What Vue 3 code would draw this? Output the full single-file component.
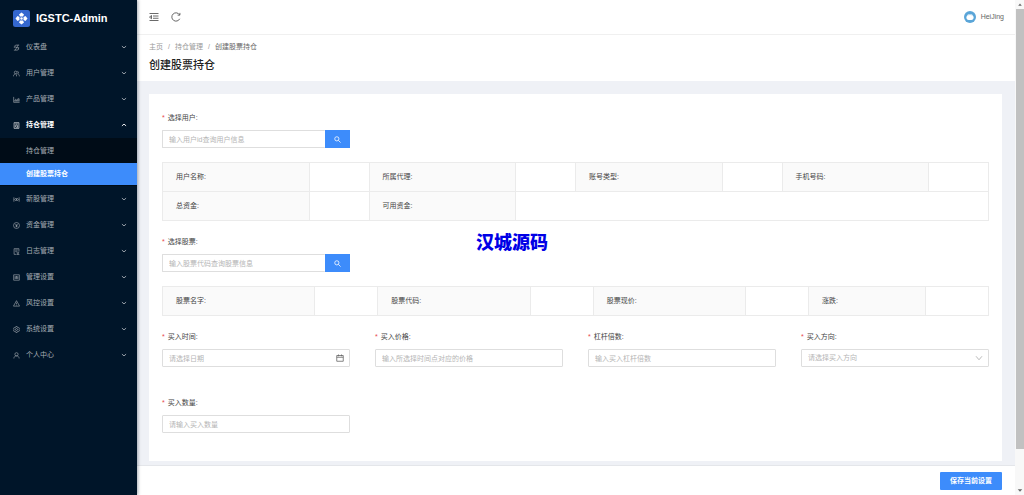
<script setup>
import { ref } from 'vue'

const menu = [
  { label: '仪表盘', icon: 'dash' },
  { label: '用户管理', icon: 'users' },
  { label: '产品管理', icon: 'chart' },
  { label: '持仓管理', icon: 'position', open: true, children: [{ label: '持仓管理' }, { label: '创建股票持仓', active: true }] },
  { label: '新股管理', icon: 'stock' },
  { label: '资金管理', icon: 'money' },
  { label: '日志管理', icon: 'log' },
  { label: '管理设置', icon: 'control' },
  { label: '风控设置', icon: 'warning' },
  { label: '系统设置', icon: 'gear' },
  { label: '个人中心', icon: 'user' },
]

const icons = {
  dash: 'M14 2.500H6.500a3 3 0 0 0 0 5.500h3a3 3 0 0 1 0 6H2M2 5h2M2 8h2M12 8h2M12 11h2M5 14l7-12',
  users: 'M6 8.500a3 3 0 1 1 0-6 3 3 0 0 1 0 6zM1 14.500c0-3.500 2-5.500 5-5.500M10 3c3 0 3.500 4.500 .5 5.500 2.500 .5 4 2.500 4 6M8 10v4.500',
  chart: 'M1.500 2v12.500h13.500M4 12.500V9M6 12.500V6.500M8 12.500V8.500M10 12.500V7M12 12.500V4.500M14 12.500V6',
  position: 'M2.500 1.500h11v13h-11zM5 4.500h6M8 12a2.500 2.500 0 1 1 0-5 2.500 2.500 0 0 1 0 5zM9.500 11.500l2 1.500',
  stock: 'M2 3v10M14 3v10M2 8h2M12 8h2M5 4.500l2.500 3.500L5 11.500M11 4.500L8.500 8l2.500 3.500M8 5v6',
  money: 'M8 1.200a6.800 6.800 0 1 1 0 13.600A6.800 6.800 0 0 1 8 1.200zM5.500 4.500L8 7.500l2.500-3M8 7.500v4.500M6 8h4M6 10h4',
  log: 'M13.500 8V1.500h-11v13H7M5 4.500h6M5 7.500h4M11 9a2 2 0 1 1 0 4 2 2 0 0 1 0-4zM8 14.800h6.500',
  control: 'M1.500 1.800h13v12.400h-13zM5 4.500v7M8 4.500v7M11 4.500v7M4 9h2M7 6.500h2M10 9h2',
  warning: 'M8 1.500L15 14H1zM8 6v4M8 11.200v1.300',
  gear: 'M6.500 1.200h3l.6 2 1.600 .9 2-.5 1.400 2.500-1.400 1.900 1.400 1.900-1.400 2.500-2-.5-1.600 .9-.6 2h-3l-.6-2-1.600-.9-2 .5L.9 9.900 2.300 8 .9 6.100l1.400-2.500 2 .5 1.600-.9zM8 5.700a2.300 2.300 0 1 1 0 4.600 2.300 2.300 0 0 1 0-4.600z',
  user: 'M8 1.500a3.700 3.700 0 1 1 0 7.400 3.700 3.700 0 0 1 0-7.400zM2 14.800c0-3.600 2.500-5.900 6-5.900s6 2.300 6 5.900',
}

const form = ref({ user: '', stock: '', date: '', price: '', lever: '', direction: '', amount: '' })
</script>

<template>
  <div class="app">
    <aside class="sidebar">
      <div class="brand">
        <svg class="brand-logo" viewBox="0 0 34 34" aria-hidden="true">
          <rect width="34" height="34" rx="5" fill="#3467cf" />
          <g fill="#fff">
            <path d="M17 5l5 4-2 4h-6l-2-4z" />
            <path d="M17 29l5-4-2-4h-6l-2 4z" />
            <path d="M5 17l4-5 4 2v6l-4 2z" />
            <path d="M29 17l-4-5-4 2v6l4 2z" />
            <circle cx="17" cy="17" r="2.500" />
          </g>
        </svg>
        <span>IGSTC-Admin</span>
      </div>
      <nav>
        <template v-for="item in menu" :key="item.label">
          <button type="button" class="menu-item" :class="{ open: item.open }">
            <svg class="menu-icon" viewBox="0 0 16 16" aria-hidden="true"><path :d="icons[item.icon]" /></svg>
            <span class="menu-label">{{ item.label }}</span>
            <svg class="arrow" viewBox="0 0 10 10" aria-hidden="true"><path d="M1.500 3.500L5 6.500l3.500-3" /></svg>
          </button>
          <div v-if="item.children" class="submenu">
            <a v-for="c in item.children" :key="c.label" href="#" :class="{ active: c.active }">{{ c.label }}</a>
          </div>
        </template>
      </nav>
    </aside>

    <div class="page">
      <header class="topbar">
        <button type="button" class="tool" aria-label="收起菜单">
          <svg viewBox="0 0 20 20"><path d="M1 3h18M8 8h11M8 12.500h11M1 17h18M5 7v6.500L1 10.200z" /></svg>
        </button>
        <button type="button" class="tool" aria-label="刷新">
          <svg viewBox="0 0 20 20"><path d="M17.500 13.500A8.300 8.300 0 1 1 17 5.500M17.800 1.800v4.500h-4.500" /></svg>
        </button>
        <button type="button" class="account">
          <svg viewBox="0 0 24 24" aria-hidden="true">
            <circle cx="12" cy="12" r="12" fill="#5aa5d8" />
            <path d="M6 9.500c2-5 10-5 12 0 2.500 3 1.500 8-3 8.500H9c-4.500-.5-5.500-5.500-3-8.500z" fill="#fff" />
            <path d="M7 8.500c3-2 7-2 10 0" stroke="#a9d2ee" stroke-width="2" fill="none" />
          </svg>
          <span>HeiJing</span>
        </button>
      </header>

      <section class="heading">
        <div class="crumbs">
          <a href="#">主页</a><i>/</i><a href="#">持仓管理</a><i>/</i><span>创建股票持仓</span>
        </div>
        <h1>创建股票持仓</h1>
      </section>

      <main>
        <form id="position-form" class="card" @submit.prevent>
          <div class="grid">
            <div class="field">
              <label for="user">选择用户:</label>
              <div class="search">
                <input id="user" v-model="form.user" type="text" placeholder="输入用户id查询用户信息" />
                <button type="button" aria-label="查询用户"><svg viewBox="0 0 16 16"><circle cx="6.500" cy="6.500" r="4.800" /><path d="M10 10l5 5" /></svg></button>
              </div>
            </div>
          </div>

          <table class="user-table">
            <colgroup>
              <template v-for="n in 4" :key="n"><col /><col class="value" /></template>
            </colgroup>
            <tbody>
              <tr>
                <th scope="row">用户名称:</th><td></td>
                <th scope="row">所属代理:</th><td></td>
                <th scope="row">账号类型:</th><td></td>
                <th scope="row">手机号码:</th><td></td>
              </tr>
              <tr>
                <th scope="row">总资金:</th><td></td>
                <th scope="row">可用资金:</th><td colspan="5"></td>
              </tr>
            </tbody>
          </table>

          <div class="grid">
            <div class="field">
              <label for="stock">选择股票:</label>
              <div class="search">
                <input id="stock" v-model="form.stock" type="text" placeholder="输入股票代码查询股票信息" />
                <button type="button" aria-label="查询股票"><svg viewBox="0 0 16 16"><circle cx="6.500" cy="6.500" r="4.800" /><path d="M10 10l5 5" /></svg></button>
              </div>
            </div>
          </div>

          <table class="stock-table">
            <colgroup>
              <col /><col class="value" /><col /><col class="value" /><col /><col class="value" /><col class="change" /><col class="value" />
            </colgroup>
            <tbody>
              <tr>
                <th scope="row">股票名字:</th><td></td>
                <th scope="row">股票代码:</th><td></td>
                <th scope="row">股票现价:</th><td></td>
                <th scope="row">涨跌:</th><td></td>
              </tr>
            </tbody>
          </table>

          <div class="grid">
            <div class="field">
              <label for="date">买入时间:</label>
              <div class="control">
                <input id="date" v-model="form.date" type="text" placeholder="请选择日期" />
                <svg class="calendar" viewBox="0 0 16 16" aria-hidden="true"><path d="M1.500 3h13v11.500h-13zM1.500 6.500h13M5 1v3.500M11 1v3.500" /></svg>
              </div>
            </div>
            <div class="field">
              <label for="price">买入价格:</label>
              <input id="price" v-model="form.price" type="text" placeholder="输入所选择时间点对应的价格" />
            </div>
            <div class="field">
              <label for="lever">杠杆倍数:</label>
              <input id="lever" v-model="form.lever" type="text" placeholder="输入买入杠杆倍数" />
            </div>
            <div class="field">
              <label for="direction">买入方向:</label>
              <div class="control">
                <select id="direction" v-model="form.direction">
                  <option value="" disabled>请选择买入方向</option>
                  <option value="up">买涨</option>
                  <option value="down">买跌</option>
                </select>
                <svg class="chevron" viewBox="0 0 16 16" aria-hidden="true"><path d="M2 4.500l6 7 6-7" /></svg>
              </div>
            </div>
            <div class="field">
              <label for="amount">买入数量:</label>
              <input id="amount" v-model="form.amount" type="text" placeholder="请输入买入数量" />
            </div>
          </div>
        </form>
      </main>

      <footer>
        <button type="submit" form="position-form" class="save">保存当前设置</button>
      </footer>
    </div>

    <div class="scrollbar" aria-hidden="true">
      <svg viewBox="0 0 9 9"><path d="M2.500 6L4.500 3.500l2 2.500z" /></svg>
      <div class="thumb"></div>
      <div class="track"></div>
      <svg viewBox="0 0 9 9"><path d="M2 3l2.500 3L7 3z" /></svg>
    </div>

    <div class="watermark">汉城源码</div>
  </div>
</template>

<style>
body {
  background: #eff1f6;
}
</style>

<style scoped>
.app {
  position: relative;
  display: flex;
  min-height: 100vh;
  font-family: "Liberation Sans", "Noto Sans CJK SC", sans-serif;
  font-size: 7px;
  line-height: 12px;
  color: #444;
}
.app *, .app *::before {
  box-sizing: border-box;
}
button, input, select {
  font: inherit;
  color: inherit;
}
button {
  border: 0;
  padding: 0;
  background: none;
  cursor: pointer;
}
a {
  color: inherit;
  text-decoration: none;
}
svg {
  display: block;
  fill: none;
  stroke: currentColor;
}

/* Sidebar */
.sidebar {
  position: relative;
  z-index: 1;
  flex: 0 0 137px;
  background: #001529;
  color: #a6adb4;
  box-shadow: 1px 0 3px rgba(0, 21, 41, 0.35);
}
.brand {
  display: flex;
  align-items: center;
  gap: 6px;
  height: 34px;
  padding: 2px 13px 0;
  color: #fff;
  font-size: 11px;
  font-weight: bold;
}
.brand-logo {
  width: 17px;
  height: 17px;
  stroke: none;
}
.menu-item {
  display: flex;
  align-items: center;
  gap: 6px;
  width: 100%;
  height: 26px;
  padding: 0 10px 0 13px;
  text-align: left;
}
.menu-icon {
  width: 7px;
  height: 7px;
  stroke-width: 1.4;
}
.menu-label {
  flex: 1;
}
.arrow {
  width: 6px;
  height: 6px;
  stroke-width: 1.5;
}
.open {
  color: #fff;
  font-weight: bold;
}
.open .arrow {
  transform: rotate(180deg);
}
.submenu {
  padding-bottom: 1px;
  background: #000c17;
}
.submenu a {
  display: block;
  padding: 0 26px;
  line-height: 25px;
}
.submenu .active {
  background: #3d8cfb;
  color: #fff;
  font-weight: bold;
  line-height: 22px;
}

/* Page frame */
.page {
  display: flex;
  flex: 1;
  flex-direction: column;
  min-width: 0;
}
.topbar {
  display: flex;
  align-items: center;
  gap: 12px;
  height: 35px;
  padding: 0 11px 0 12px;
  background: #fff;
  border-bottom: 1px solid #f0f0f0;
}
.tool svg {
  width: 10px;
  height: 10px;
  stroke-width: 1.6;
}
.account {
  display: flex;
  align-items: center;
  gap: 5px;
  margin-left: auto;
  color: #666;
}
.account svg {
  width: 12px;
  height: 12px;
  stroke: none;
}
.heading {
  padding: 6px 12px 7px;
  background: #fff;
}
.crumbs {
  display: flex;
  gap: 5px;
  color: #999;
}
.crumbs i {
  font-style: normal;
}
.crumbs span {
  color: #666;
}
h1 {
  margin: 4px 0 0;
  color: #222;
  font-size: 11px;
  font-weight: 500;
  line-height: 17px;
}
main {
  flex: 1;
  padding: 13px 13px 3px 12px;
}
.card {
  padding: 18px 13px 28px;
  background: #fff;
}
footer {
  position: sticky;
  bottom: 0;
  display: flex;
  align-items: center;
  justify-content: flex-end;
  height: 30px;
  padding: 0 13px;
  background: #fff;
  border-top: 1px solid #e4e6ea;
}
.save {
  height: 18px;
  padding: 0 10px;
  border-radius: 1px;
  background: #3d8cfb;
  color: #fff;
  font-weight: bold;
}

/* Form */
.grid {
  display: grid;
  grid-template-columns: repeat(4, 1fr);
  gap: 30px 25px;
}
.field {
  min-width: 0;
}
label {
  display: block;
  margin-bottom: 6px;
}
label::before {
  content: "*";
  margin-right: 3px;
  color: #e8474b;
}
input, select {
  display: block;
  width: 100%;
  height: 18px;
  padding: 0 6px;
  border: 1px solid #dedede;
  border-radius: 1px;
  background: #fff;
  outline: 0;
}
input::placeholder {
  color: #b5b5b5;
}
select {
  appearance: none;
  color: #b5b5b5;
}
.search {
  display: flex;
}
.search input {
  flex: 1;
  min-width: 0;
  border-right: 0;
}
.search button {
  display: grid;
  place-items: center;
  width: 25px;
  background: #3d8cfb;
  color: #fff;
}
.search svg {
  width: 7px;
  height: 7px;
  stroke-width: 1.8;
}
.control {
  position: relative;
}
.control svg {
  position: absolute;
  top: 5px;
  right: 6px;
  width: 8px;
  height: 8px;
  pointer-events: none;
}
.calendar {
  color: #666;
  stroke-width: 1.6;
}
.chevron {
  color: #aaa;
  stroke-width: 1.6;
}

/* Detail tables */
table {
  width: 100%;
  margin: 14px 0 15px;
  border-collapse: collapse;
  table-layout: fixed;
}
.user-table .value {
  width: 60px;
}
.stock-table .value {
  width: 63px;
}
.change {
  width: 117px;
}
th, td {
  height: 29px;
  padding: 0 13px;
  border: 1px solid #ebebeb;
  text-align: left;
}
th {
  background: #fafafa;
  font-weight: normal;
}

/* Scrollbar */
.scrollbar {
  display: flex;
  flex: 0 0 9px;
  flex-direction: column;
  padding-left: 1px;
  background: #f8f8f8;
}
.scrollbar svg {
  width: 8px;
  height: 9px;
  fill: #666;
  stroke: none;
}
.thumb {
  flex: 12;
  background: #c1c1c1;
}
.track {
  flex: 1;
}

.watermark {
  position: absolute;
  top: 49%;
  left: 50%;
  transform: translate(-50%, -50%);
  color: #0000e6;
  font-size: 18px;
  font-weight: 900;
  line-height: 22px;
}
</style>
